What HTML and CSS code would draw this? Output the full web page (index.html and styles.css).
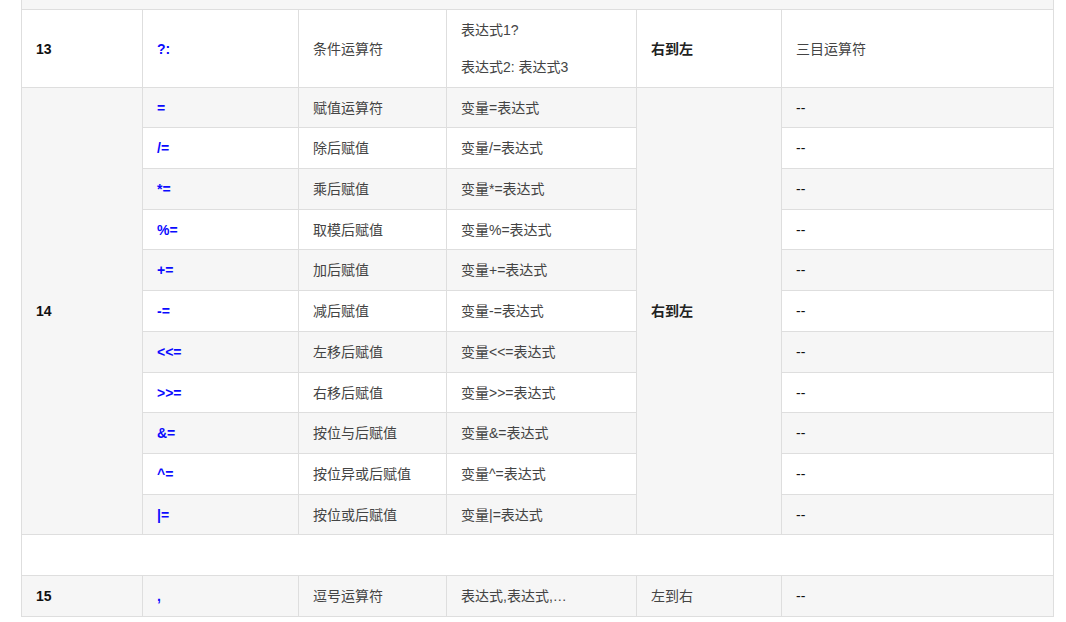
FILE: index.html
```html
<!DOCTYPE html>
<html lang="zh-CN">
<head>
<meta charset="utf-8">
<title>运算符优先级</title>
<link rel="stylesheet" href="styles.css">
</head>
<body>
<table class="ops">
  <colgroup>
    <col class="c1"><col class="c2"><col class="c3"><col class="c4"><col class="c5"><col class="c6">
  </colgroup>
  <tbody>
    <tr class="top"><td colspan="6"></td></tr>
    <tr class="white">
      <td class="num">13</td>
      <td class="op">?:</td>
      <td>条件运算符</td>
      <td><p class="ln">表达式1?</p><p class="ln second">表达式2: 表达式3</p></td>
      <td class="dir">右到左</td>
      <td>三目运算符</td>
    </tr>
    <tr class="grey">
      <td class="num group" rowspan="11">14</td>
      <td class="op">=</td>
      <td>赋值运算符</td>
      <td>变量=表达式</td>
      <td class="dir group" rowspan="11">右到左</td>
      <td class="dash">--</td>
    </tr>
    <tr class="white"><td class="op">/=</td><td>除后赋值</td><td>变量/=表达式</td><td class="dash">--</td></tr>
    <tr class="grey"><td class="op">*=</td><td>乘后赋值</td><td>变量*=表达式</td><td class="dash">--</td></tr>
    <tr class="white"><td class="op">%=</td><td>取模后赋值</td><td>变量%=表达式</td><td class="dash">--</td></tr>
    <tr class="grey"><td class="op">+=</td><td>加后赋值</td><td>变量+=表达式</td><td class="dash">--</td></tr>
    <tr class="white"><td class="op">-=</td><td>减后赋值</td><td>变量-=表达式</td><td class="dash">--</td></tr>
    <tr class="grey"><td class="op">&lt;&lt;=</td><td>左移后赋值</td><td>变量&lt;&lt;=表达式</td><td class="dash">--</td></tr>
    <tr class="white"><td class="op">&gt;&gt;=</td><td>右移后赋值</td><td>变量&gt;&gt;=表达式</td><td class="dash">--</td></tr>
    <tr class="grey"><td class="op">&amp;=</td><td>按位与后赋值</td><td>变量&amp;=表达式</td><td class="dash">--</td></tr>
    <tr class="white"><td class="op">^=</td><td>按位异或后赋值</td><td>变量^=表达式</td><td class="dash">--</td></tr>
    <tr class="grey"><td class="op">|=</td><td>按位或后赋值</td><td>变量|=表达式</td><td class="dash">--</td></tr>
    <tr class="white empty"><td colspan="6"></td></tr>
    <tr class="grey">
      <td class="num">15</td>
      <td class="op">,</td>
      <td>逗号运算符</td>
      <td>表达式,表达式,…</td>
      <td>左到右</td>
      <td class="dash">--</td>
    </tr>
  </tbody>
</table>
</body>
</html>
```

FILE: styles.css
```css
html, body {
  margin: 0;
  padding: 0;
  background: #ffffff;
}

body {
  font-family: "Liberation Sans", Arial, "Noto Sans CJK SC", sans-serif;
  font-size: 14px;
  color: #444;
}

.ops {
  border-collapse: collapse;
  table-layout: fixed;
  width: 1032px;
  margin-left: 21px;
}

.c1 { width: 121px; }
.c2 { width: 156px; }
.c3 { width: 148px; }
.c4 { width: 190px; }
.c5 { width: 145px; }
.c6 { width: 272px; }

.ops td {
  border: 1px solid #dedede;
  padding: 10px 15px 9.7px 14px;
  line-height: 20px;
  vertical-align: middle;
  text-align: left;
}

.ops tr.top td {
  height: 9px;
  padding: 0;
  line-height: 0;
  border-top: none;
  background: #f6f6f6;
}

.grey td { background: #f6f6f6; }
.white td { background: #ffffff; }
.ops td.group { background: #f6f6f6; }

.empty td {
  height: 20px;
}

.num {
  font-weight: bold;
  color: #111;
}

.op {
  font-weight: bold;
  color: #0a0aff;
}

.dir {
  font-weight: bold;
  color: #222;
}

.dash {
  color: #111;
}

.ln {
  margin: 0;
}

.ln.second {
  margin-top: 17px;
}
```
